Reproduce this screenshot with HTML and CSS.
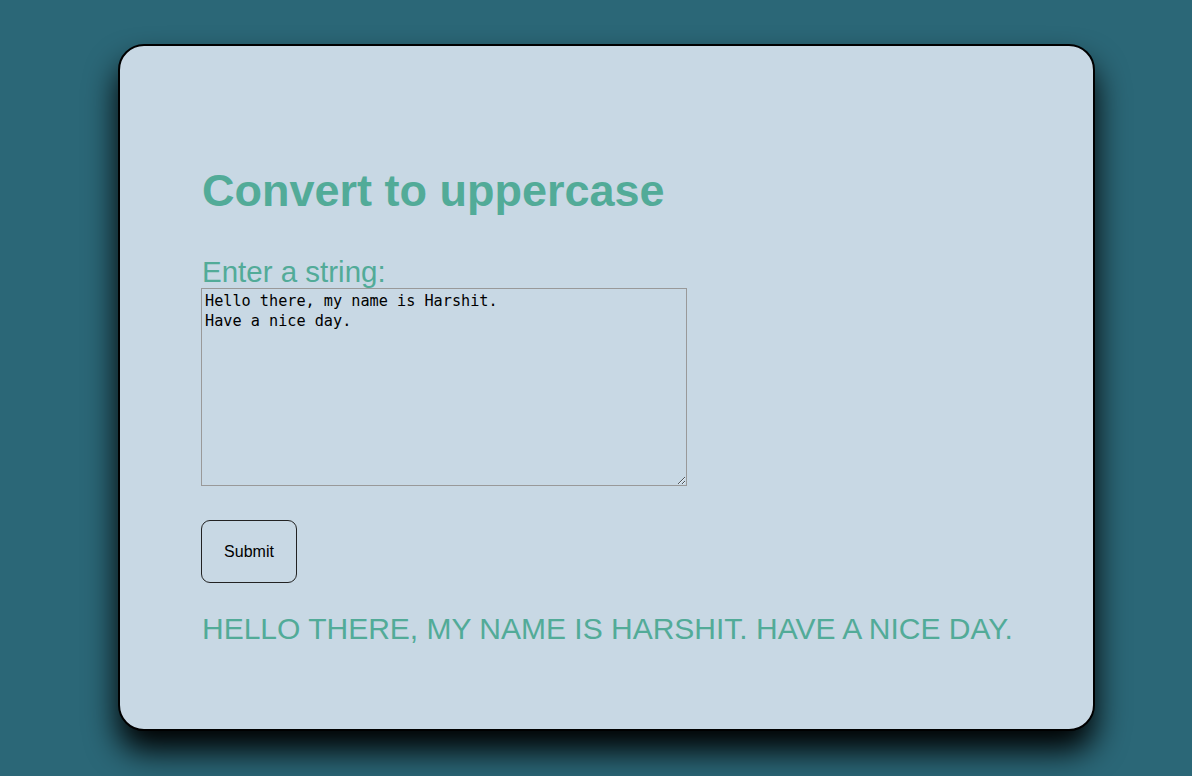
FILE: index.html
```html
<!DOCTYPE html>
<html lang="en">
<head>
<meta charset="utf-8">
<title>Convert to uppercase</title>
<link rel="stylesheet" href="styles.css">
</head>
<body>
<main class="card">
  <h1 class="title">Convert to uppercase</h1>
  <form class="form">
    <label class="label" for="text">Enter a string:</label>
    <textarea class="input" id="text">Hello there, my name is Harshit.
Have a nice day.</textarea>
    <button class="submit" type="button">Submit</button>
  </form>
  <p class="result">HELLO THERE, MY NAME IS HARSHIT. HAVE A NICE DAY.</p>
</main>
</body>
</html>
```
FILE: styles.css
```css
html, body {
  margin: 0;
  padding: 0;
}
body {
  background: #2b6777;
  font-family: "Liberation Sans", Arial, sans-serif;
  min-height: 776px;
  padding-top: 44px;
  box-sizing: border-box;
}
.card {
  box-sizing: border-box;
  margin-left: 118px;
  width: 977px;
  height: 687px;
  background: #c8d8e4;
  border: 2px solid #000;
  border-radius: 26px;
  box-shadow: 0 20px 32px #000;
  padding: 119px 80px 0 82px;
}
.title {
  margin: 0;
  color: #52ab98;
  font-size: 45px;
  font-weight: bold;
  line-height: 52px;
}
.form {
  display: flex;
  flex-direction: column;
  align-items: flex-start;
  margin-top: 39px;
}
.label {
  color: #52ab98;
  font-size: 29.5px;
  line-height: 32px;
}
.input {
  box-sizing: border-box;
  width: 486px;
  height: 198px;
  margin: 0 0 0 -1px;
  padding: 2px 3px;
  background: transparent;
  border: 1px solid #999;
  font-family: "DejaVu Sans Mono", monospace;
  font-size: 15.2px;
  line-height: 20px;
  color: #000;
}
.submit {
  margin-top: 34px;
  margin-left: -1px;
  width: 96px;
  height: 63px;
  background: transparent;
  border: 1px solid #222;
  border-radius: 9px;
  font-family: "Liberation Sans", Arial, sans-serif;
  font-size: 16px;
  color: #000;
}
.result {
  margin: 28px 0 0;
  color: #52ab98;
  font-size: 30px;
  line-height: 36px;
}
```
